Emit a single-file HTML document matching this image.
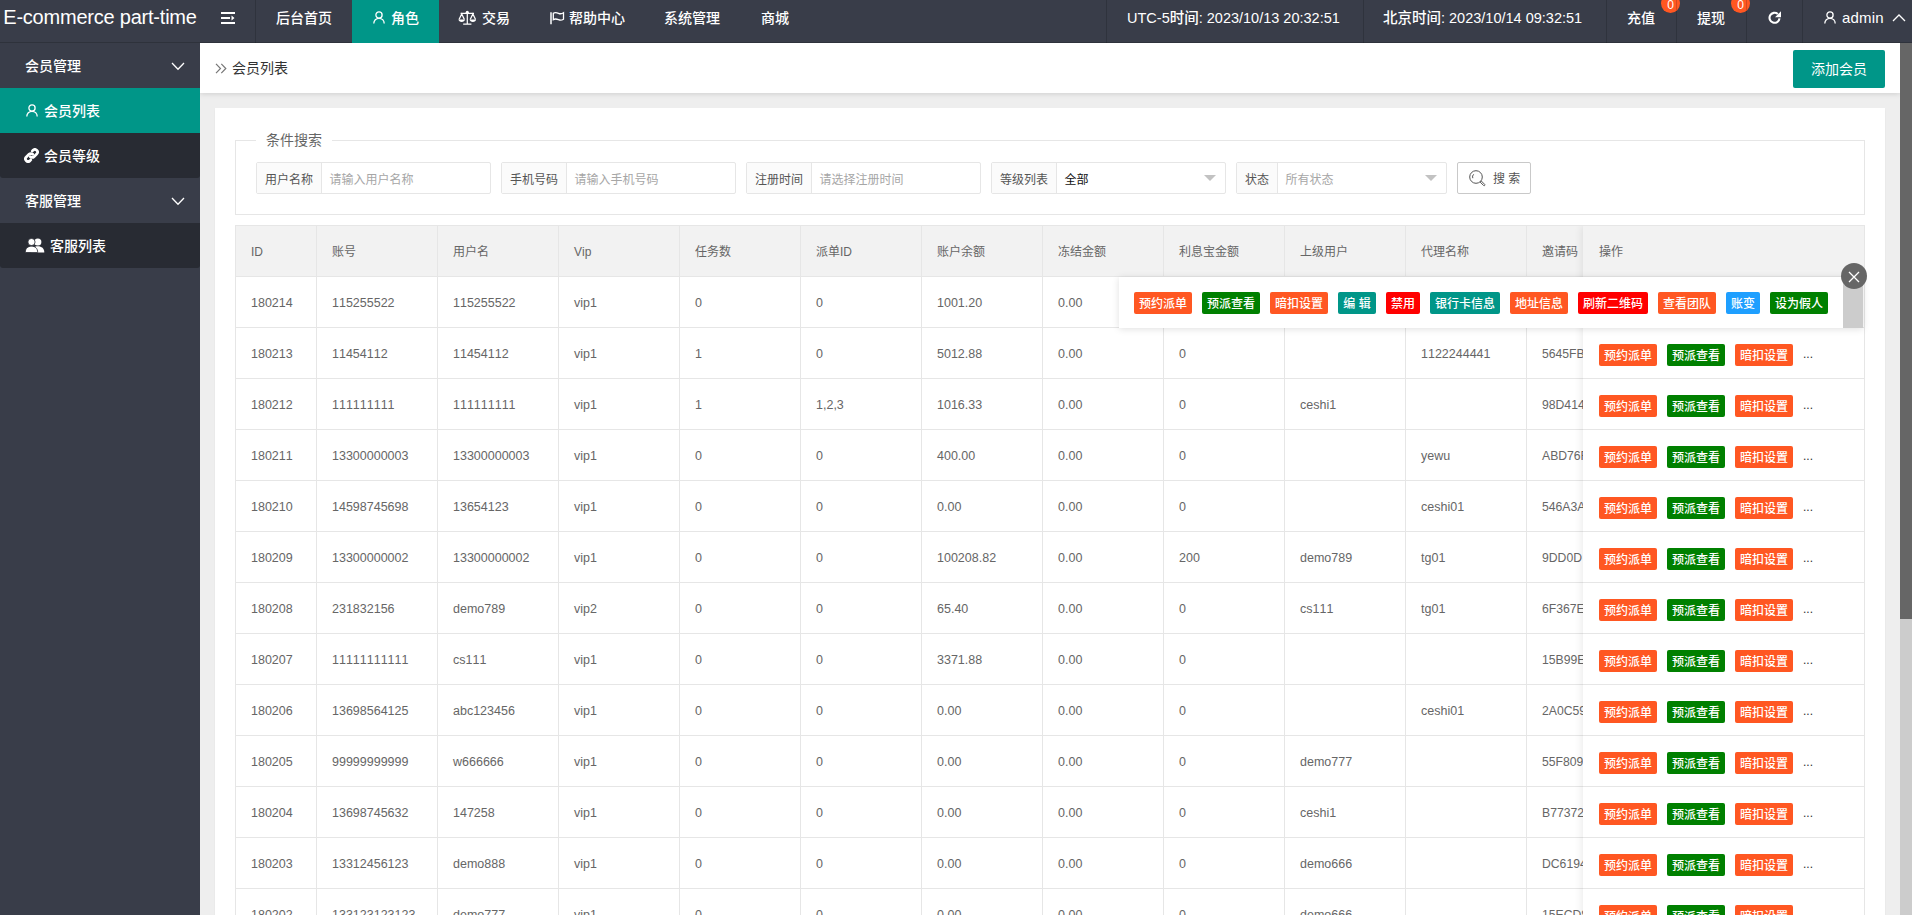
<!DOCTYPE html>
<html lang="zh-CN">
<head>
<meta charset="utf-8">
<title>会员列表</title>
<style>
*{box-sizing:border-box;margin:0;padding:0}
html,body{width:1912px;height:915px;overflow:hidden}
body{font-family:"Liberation Sans","Noto Sans CJK SC",sans-serif;font-size:14px;color:#333;background:#eee;position:relative;line-height:1}
a{text-decoration:none;color:inherit}
svg{display:block}
/* ---------- header ---------- */
.hd{position:absolute;left:0;top:0;width:1912px;height:43px;background:#393D49;color:#fff;z-index:20;overflow:hidden;box-shadow:inset 0 -1px 0 rgba(0,0,0,.18)}
.logo{position:absolute;left:0;top:0;width:200px;height:43px;line-height:35px;text-align:center;font-size:20px;white-space:nowrap;letter-spacing:-.22px}
.nv{position:absolute;top:0;height:43px;line-height:36px;font-size:14px;white-space:nowrap;color:#fff}
.nv.sep{border-left:1px solid rgba(0,0,0,.16)}
.nv.act{background:#009688}
.nv svg{position:absolute}
.nv .t{position:absolute;top:0;font-weight:500}
.tm{font-size:14.5px}
.badge{position:absolute;top:-6px;width:19px;height:19px;border-radius:50%;background:#FF5722;color:#fff;font-size:12px;line-height:22px;text-align:center}
/* ---------- side ---------- */
.sd{position:absolute;left:0;top:43px;width:200px;height:872px;background:#393D49;color:#fff;z-index:10}
.si{position:absolute;left:0;width:200px;height:45px;line-height:45px;font-size:14px;white-space:nowrap}
.si.ch{background:#282B33}
.si.on{background:#009688}
.si.last{border-radius:0 0 3px 3px}
.si .t{position:absolute;top:1px;font-weight:500}
.si svg{position:absolute}
/* ---------- body ---------- */
.bd{position:absolute;left:200px;top:43px;width:1700px;height:872px;background:#eee;overflow:hidden}
.sb{position:absolute;left:1900px;top:43px;width:12px;height:872px;background:#ccc;z-index:5}
.sb i{position:absolute;left:0;top:0;width:12px;height:576px;background:#666}
.ch1{position:absolute;left:0;top:0;width:1700px;height:50px;background:#fff;box-shadow:0 1px 5px rgba(0,0,0,.13)}
.ch1 .bc{position:absolute;left:32px;top:0;line-height:50px;font-size:14px;color:#333}
.addbtn{position:absolute;left:1593px;top:7px;width:92px;height:38px;line-height:38px;background:#009688;color:#fff;font-size:14px;text-align:center;border-radius:2px}
.card{position:absolute;left:15px;top:65px;width:1670px;height:900px;background:#fff;box-shadow:0 1px 2px rgba(0,0,0,.05)}
.fs{position:absolute;left:20px;top:32px;width:1630px;height:75px;border:1px solid #e6e6e6}
.lg{position:absolute;left:20px;top:-11px;height:20px;line-height:20px;padding:0 10px;background:#fff;font-size:14px;color:#666}
.fg{position:absolute;top:21px;height:32px;border:1px solid #e6e6e6;border-radius:2px;background:#fff;font-size:12px}
.fg .lb{position:absolute;left:0;top:0;height:30px;line-height:30px;padding-top:2px;background:#FBFBFB;border-right:1px solid #e6e6e6;color:#555;text-align:center}
.fg .ip{position:absolute;top:0;height:30px;line-height:30px;padding-top:2px;color:#a6a6a6;padding-left:7.500px}
.fg .ip.v{color:#111}
.fg .ar{position:absolute;right:9px;top:12px;width:0;height:0;border:6px solid transparent;border-top-color:#c2c2c2;border-bottom-width:0}
.sbtn{position:absolute;left:1221px;top:21px;width:74px;height:32px;border:1px solid #c9c9c9;border-radius:2px;background:#fff;color:#555;font-size:12px;line-height:30px}
.sbtn svg{position:absolute;left:11px;top:7px}
.sbtn span{position:absolute;left:35px;top:1px}
/* ---------- table ---------- */
.tb{position:absolute;left:20px;top:117px;width:1630px;height:800px;border:1px solid #e6e6e6;border-bottom:0;overflow:hidden;background:#fff}
table{font-kerning:none;border-collapse:separate;border-spacing:0;table-layout:fixed;width:1348px}
th,td{height:51px;border-right:1px solid #e6e6e6;border-bottom:1px solid #e6e6e6;font-size:12.5px;color:#666;font-weight:400;text-align:left;padding:0;overflow:hidden;white-space:nowrap}
th{background:#f2f2f2;font-size:12px}
td:last-child{font-size:12.200px}
.c{position:relative;top:1px;padding:0 15px;height:28px;line-height:28px;overflow:hidden;white-space:nowrap}
.fx{position:absolute;left:1347px;top:0;width:281px;height:800px;background:#fff;box-shadow:-1px 0 8px rgba(0,0,0,.09)}
.fh{height:51px;background:#f2f2f2;border-bottom:1px solid #e6e6e6;line-height:52px;padding-left:16px;font-size:12px;color:#666}
.fr{position:relative;height:51px;border-bottom:1px solid #e6e6e6}
.b{position:absolute;top:16px;height:22px;line-height:24px;overflow:hidden;font-size:12px;color:#fff;border-radius:2px;text-align:center;white-space:nowrap;font-weight:500}
.b.o{background:#FF5722}.b.g{background:#008000}.b.t{background:#009688}.b.r{background:#FF0000}.b.bl{background:#1E9FFF}
.fr .b{width:58px}
.fr .b:nth-child(1){left:16px}.fr .b:nth-child(2){left:84px}.fr .b:nth-child(3){left:152px}
.more{position:absolute;left:220px;top:15px;font-size:12px;line-height:22px;color:#333}
.tips{position:absolute;left:904px;top:169px;width:744px;height:51px;background:#fff;box-shadow:0 1px 7px rgba(0,0,0,.13);z-index:8}
.tips .b{top:15px}
.tips .scr{position:absolute;right:0;top:0;width:20px;height:51px;background:#ccc}
.tipc{position:absolute;left:1626px;top:155px;width:26px;height:26px;border-radius:50%;background:#666;z-index:9}
</style>
</head>
<body>
<!-- header -->
<div class="hd">
  <div class="logo">E-commerce part-time</div>
  <div class="nv" style="left:200px;width:55px">
    <svg style="left:21px;top:12px" width="14" height="12" viewBox="0 0 14 12"><path d="M0 0h14v2H0zM0 5h9v2H0zM0 10h14v2H0zM10.5 3.6l3 2.4-3 2.4z" fill="#fff"/></svg>
  </div>
  <div class="nv sep" style="left:255px;width:97px"><span class="t" style="left:20px">后台首页</span></div>
  <div class="nv act" style="left:352px;width:87px">
    <svg style="left:21px;top:11px" width="12" height="13" viewBox="0 0 12 13"><circle cx="6" cy="4" r="3.1" fill="none" stroke="#fff" stroke-width="1.3"/><path d="M.8 12.6c0-3.2 2.2-5.3 5.2-5.3s5.2 2.100 5.200 5.300" fill="none" stroke="#fff" stroke-width="1.300"/></svg>
    <span class="t" style="left:39px">角色</span>
  </div>
  <div class="nv" style="left:439px;width:90px">
    <svg style="left:19px;top:10px" width="18.600" height="15.500" viewBox="0 0 18 15"><g fill="none" stroke="#fff" stroke-width="1.2"><path d="M9 1.500v11.500M5 13.600h8M2.500 3.300h13"/><path d="M1 9.200l2.600-5.400 2.600 5.400M11.800 9.200l2.600-5.400 2.600 5.400"/></g><path d="M.5 9.200h6.200c0 1.500-1.400 2.300-3.100 2.300S.5 10.700.5 9.200zM11.300 9.200h6.200c0 1.500-1.400 2.300-3.100 2.300s-3.100-.8-3.100-2.300z" fill="#fff"/><circle cx="9" cy="2.200" r="1.500" fill="#fff"/></svg>
    <span class="t" style="left:43px">交易</span>
  </div>
  <div class="nv" style="left:529px;width:115px">
    <svg style="left:21px;top:11px" width="15" height="14" viewBox="0 0 15 14"><path d="M1 1.200v12" stroke="#fff" stroke-width="1.500" fill="none"/><path d="M3.300 2.200c2-1.200 3.600-.6 5.200.1s3 .8 5-.5v6.400c-2 1.300-3.400 1.200-5 .5s-3.200-1.300-5.200-.1z" fill="none" stroke="#fff" stroke-width="1.300"/></svg>
    <span class="t" style="left:40px">帮助中心</span>
  </div>
  <div class="nv" style="left:644px;width:97px"><span class="t" style="left:20px">系统管理</span></div>
  <div class="nv" style="left:741px;width:68px"><span class="t" style="left:20px">商城</span></div>

  <div class="nv sep tm" style="left:1106px;width:257px"><span class="t" style="left:20px">UTC-5时间: 2023/10/13 20:32:51</span></div>
  <div class="nv sep tm" style="left:1363px;width:243px"><span class="t" style="left:19px">北京时间: 2023/10/14 09:32:51</span></div>
  <div class="nv sep" style="left:1606px;width:70px"><span class="t" style="left:20px">充值</span><span class="badge" style="left:54px">0</span></div>
  <div class="nv sep" style="left:1676px;width:70px"><span class="t" style="left:20px">提现</span><span class="badge" style="left:54px">0</span></div>
  <div class="nv sep" style="left:1746px;width:56px">
    <svg style="left:21px;top:11px" width="14" height="14" viewBox="0 0 14 14"><path d="M11.500 7.400a5 5 0 1 1-1.700-4.400" fill="none" stroke="#fff" stroke-width="2.100"/><path d="M13 .2v6H7z" fill="#fff"/></svg>
  </div>
  <div class="nv sep" style="left:1802px;width:110px">
    <svg style="left:21px;top:11px" width="12" height="13" viewBox="0 0 12 13"><circle cx="6" cy="4" r="3.1" fill="none" stroke="#fff" stroke-width="1.300"/><path d="M.8 12.600c0-3.200 2.200-5.300 5.200-5.300s5.200 2.100 5.200 5.300" fill="none" stroke="#fff" stroke-width="1.300"/></svg>
    <span class="t" style="left:39px;font-size:15px;letter-spacing:.2px">admin</span>
    <svg style="left:89px;top:14px" width="14" height="8" viewBox="0 0 14 8"><path d="M1 7l6-6 6 6" fill="none" stroke="#fff" stroke-width="1.300"/></svg>
  </div>
</div>

<!-- sidebar -->
<div class="sd">
  <div class="si" style="top:0"><span class="t" style="left:25px">会员管理</span>
    <svg style="left:171px;top:19px" width="14" height="9" viewBox="0 0 14 9"><path d="M1 1l6 6.300 6-6.300" fill="none" stroke="#fff" stroke-width="1.300"/></svg></div>
  <div class="si ch on" style="top:45px">
    <svg style="left:26px;top:16px" width="12" height="13" viewBox="0 0 12 13"><circle cx="6" cy="4" r="3.100" fill="none" stroke="#fff" stroke-width="1.300"/><path d="M.8 12.600c0-3.200 2.200-5.300 5.200-5.300s5.200 2.100 5.200 5.300" fill="none" stroke="#fff" stroke-width="1.300"/></svg>
    <span class="t" style="left:44px">会员列表</span></div>
  <div class="si ch last" style="top:90px">
    <svg style="left:24px;top:15px" width="15" height="15" viewBox="0 0 15 15"><g fill="none" stroke="#fff" stroke-width="2.700" stroke-linecap="round"><path d="M6.300 8.700a2.600 2.600 0 0 0 3.700 0l2.700-2.700a2.600 2.600 0 0 0-3.700-3.700l-.8.800"/><path d="M8.700 6.300a2.600 2.600 0 0 0-3.700 0l-2.700 2.700a2.600 2.600 0 0 0 3.700 3.700l.8-.8"/></g></svg>
    <span class="t" style="left:44px">会员等级</span></div>
  <div class="si" style="top:135px"><span class="t" style="left:25px">客服管理</span>
    <svg style="left:171px;top:19px" width="14" height="9" viewBox="0 0 14 9"><path d="M1 1l6 6.300 6-6.300" fill="none" stroke="#fff" stroke-width="1.300"/></svg></div>
  <div class="si ch last" style="top:180px">
    <svg style="left:25px;top:15px" width="20" height="15" viewBox="0 0 20 15"><g fill="#fff"><circle cx="12.800" cy="4" r="3.600"/><path d="M6.300 14.500c0-4.200 2.600-6.300 6.500-6.300s6.500 2.100 6.500 6.300z"/><circle cx="6.500" cy="4" r="3.600" stroke="#282B33" stroke-width=".8"/><path d="M.3 14.500c0-4.200 2.500-6.300 6.200-6.300s6.200 2.100 6.200 6.300z" stroke="#282B33" stroke-width=".8"/></g></svg>
    <span class="t" style="left:50px">客服列表</span></div>
</div>

<!-- scrollbar -->
<div class="sb"><i></i></div>

<!-- body -->
<div class="bd">
  <div class="ch1">
    <svg style="position:absolute;left:15px;top:20px" width="12" height="11" viewBox="0 0 12 11"><path d="M1 .8l4.500 4.700L1 10.200M6.300 .8l4.500 4.700-4.500 4.700" fill="none" stroke="#777" stroke-width="1.200"/></svg>
    <span class="bc">会员列表</span>
    <a class="addbtn">添加会员</a>
  </div>
  <div class="card">
    <div class="fs">
      <span class="lg">条件搜索</span>
      <div class="fg" style="left:20px;width:235px"><span class="lb" style="width:65px">用户名称</span><span class="ip" style="left:65px">请输入用户名称</span></div>
      <div class="fg" style="left:265px;width:235px"><span class="lb" style="width:65px">手机号码</span><span class="ip" style="left:65px">请输入手机号码</span></div>
      <div class="fg" style="left:510px;width:235px"><span class="lb" style="width:65px">注册时间</span><span class="ip" style="left:65px">请选择注册时间</span></div>
      <div class="fg" style="left:755px;width:235px"><span class="lb" style="width:65px">等级列表</span><span class="ip v" style="left:65px">全部</span><i class="ar"></i></div>
      <div class="fg" style="left:1000px;width:211px"><span class="lb" style="width:41px">状态</span><span class="ip" style="left:41px">所有状态</span><i class="ar"></i></div>
      <a class="sbtn"><svg width="17" height="17" viewBox="0 0 17 17"><circle cx="7" cy="7" r="6.300" fill="none" stroke="#555" stroke-width="1"/><path d="M3.800 8.200a3.400 3.400 0 0 1 .9-3.900" fill="none" stroke="#555" stroke-width="1"/><path d="M11.200 12.100l1.100-1.100 3.500 3.500a.8.800 0 0 1-1.100 1.100z" fill="none" stroke="#555" stroke-width="1"/></svg><span>搜 索</span></a>
    </div>
    <div class="tb">
      <table>
        <colgroup><col style="width:81px"><col style="width:121px"><col style="width:121px"><col style="width:121px"><col style="width:121px"><col style="width:121px"><col style="width:121px"><col style="width:121px"><col style="width:121px"><col style="width:121px"><col style="width:121px"><col style="width:178px"></colgroup>
        <thead><tr><th><div class="c">ID</div></th><th><div class="c">账号</div></th><th><div class="c">用户名</div></th><th><div class="c">Vip</div></th><th><div class="c">任务数</div></th><th><div class="c">派单ID</div></th><th><div class="c">账户余额</div></th><th><div class="c">冻结金额</div></th><th><div class="c">利息宝金额</div></th><th><div class="c">上级用户</div></th><th><div class="c">代理名称</div></th><th><div class="c">邀请码</div></th></tr></thead>
        <tbody>
<tr><td><div class="c">180214</div></td><td><div class="c">115255522</div></td><td><div class="c">115255522</div></td><td><div class="c">vip1</div></td><td><div class="c">0</div></td><td><div class="c">0</div></td><td><div class="c">1001.20</div></td><td><div class="c">0.00</div></td><td><div class="c">0</div></td><td><div class="c"></div></td><td><div class="c"></div></td><td><div class="c">7C1D2E</div></td></tr>
<tr><td><div class="c">180213</div></td><td><div class="c">11454112</div></td><td><div class="c">11454112</div></td><td><div class="c">vip1</div></td><td><div class="c">1</div></td><td><div class="c">0</div></td><td><div class="c">5012.88</div></td><td><div class="c">0.00</div></td><td><div class="c">0</div></td><td><div class="c"></div></td><td><div class="c">1122244441</div></td><td><div class="c">5645FB</div></td></tr>
<tr><td><div class="c">180212</div></td><td><div class="c">111111111</div></td><td><div class="c">111111111</div></td><td><div class="c">vip1</div></td><td><div class="c">1</div></td><td><div class="c">1,2,3</div></td><td><div class="c">1016.33</div></td><td><div class="c">0.00</div></td><td><div class="c">0</div></td><td><div class="c">ceshi1</div></td><td><div class="c"></div></td><td><div class="c">98D414</div></td></tr>
<tr><td><div class="c">180211</div></td><td><div class="c">13300000003</div></td><td><div class="c">13300000003</div></td><td><div class="c">vip1</div></td><td><div class="c">0</div></td><td><div class="c">0</div></td><td><div class="c">400.00</div></td><td><div class="c">0.00</div></td><td><div class="c">0</div></td><td><div class="c"></div></td><td><div class="c">yewu</div></td><td><div class="c">ABD76F</div></td></tr>
<tr><td><div class="c">180210</div></td><td><div class="c">14598745698</div></td><td><div class="c">13654123</div></td><td><div class="c">vip1</div></td><td><div class="c">0</div></td><td><div class="c">0</div></td><td><div class="c">0.00</div></td><td><div class="c">0.00</div></td><td><div class="c">0</div></td><td><div class="c"></div></td><td><div class="c">ceshi01</div></td><td><div class="c">546A3A</div></td></tr>
<tr><td><div class="c">180209</div></td><td><div class="c">13300000002</div></td><td><div class="c">13300000002</div></td><td><div class="c">vip1</div></td><td><div class="c">0</div></td><td><div class="c">0</div></td><td><div class="c">100208.82</div></td><td><div class="c">0.00</div></td><td><div class="c">200</div></td><td><div class="c">demo789</div></td><td><div class="c">tg01</div></td><td><div class="c">9DD0D</div></td></tr>
<tr><td><div class="c">180208</div></td><td><div class="c">231832156</div></td><td><div class="c">demo789</div></td><td><div class="c">vip2</div></td><td><div class="c">0</div></td><td><div class="c">0</div></td><td><div class="c">65.40</div></td><td><div class="c">0.00</div></td><td><div class="c">0</div></td><td><div class="c">cs111</div></td><td><div class="c">tg01</div></td><td><div class="c">6F367E</div></td></tr>
<tr><td><div class="c">180207</div></td><td><div class="c">11111111111</div></td><td><div class="c">cs111</div></td><td><div class="c">vip1</div></td><td><div class="c">0</div></td><td><div class="c">0</div></td><td><div class="c">3371.88</div></td><td><div class="c">0.00</div></td><td><div class="c">0</div></td><td><div class="c"></div></td><td><div class="c"></div></td><td><div class="c">15B99E</div></td></tr>
<tr><td><div class="c">180206</div></td><td><div class="c">13698564125</div></td><td><div class="c">abc123456</div></td><td><div class="c">vip1</div></td><td><div class="c">0</div></td><td><div class="c">0</div></td><td><div class="c">0.00</div></td><td><div class="c">0.00</div></td><td><div class="c">0</div></td><td><div class="c"></div></td><td><div class="c">ceshi01</div></td><td><div class="c">2A0C59</div></td></tr>
<tr><td><div class="c">180205</div></td><td><div class="c">99999999999</div></td><td><div class="c">w666666</div></td><td><div class="c">vip1</div></td><td><div class="c">0</div></td><td><div class="c">0</div></td><td><div class="c">0.00</div></td><td><div class="c">0.00</div></td><td><div class="c">0</div></td><td><div class="c">demo777</div></td><td><div class="c"></div></td><td><div class="c">55F809</div></td></tr>
<tr><td><div class="c">180204</div></td><td><div class="c">13698745632</div></td><td><div class="c">147258</div></td><td><div class="c">vip1</div></td><td><div class="c">0</div></td><td><div class="c">0</div></td><td><div class="c">0.00</div></td><td><div class="c">0.00</div></td><td><div class="c">0</div></td><td><div class="c">ceshi1</div></td><td><div class="c"></div></td><td><div class="c">B77372</div></td></tr>
<tr><td><div class="c">180203</div></td><td><div class="c">13312456123</div></td><td><div class="c">demo888</div></td><td><div class="c">vip1</div></td><td><div class="c">0</div></td><td><div class="c">0</div></td><td><div class="c">0.00</div></td><td><div class="c">0.00</div></td><td><div class="c">0</div></td><td><div class="c">demo666</div></td><td><div class="c"></div></td><td><div class="c">DC6194</div></td></tr>
<tr><td><div class="c">180202</div></td><td><div class="c">133123123123</div></td><td><div class="c">demo777</div></td><td><div class="c">vip1</div></td><td><div class="c">0</div></td><td><div class="c">0</div></td><td><div class="c">0.00</div></td><td><div class="c">0.00</div></td><td><div class="c">0</div></td><td><div class="c">demo666</div></td><td><div class="c"></div></td><td><div class="c">15ECD8</div></td></tr>
        </tbody>
      </table>
      <div class="fx">
        <div class="fh">操作</div>
<div class="fr"><a class="b o">预约派单</a><a class="b g">预派查看</a><a class="b o">暗扣设置</a><span class="more">...</span></div>
<div class="fr"><a class="b o">预约派单</a><a class="b g">预派查看</a><a class="b o">暗扣设置</a><span class="more">...</span></div>
<div class="fr"><a class="b o">预约派单</a><a class="b g">预派查看</a><a class="b o">暗扣设置</a><span class="more">...</span></div>
<div class="fr"><a class="b o">预约派单</a><a class="b g">预派查看</a><a class="b o">暗扣设置</a><span class="more">...</span></div>
<div class="fr"><a class="b o">预约派单</a><a class="b g">预派查看</a><a class="b o">暗扣设置</a><span class="more">...</span></div>
<div class="fr"><a class="b o">预约派单</a><a class="b g">预派查看</a><a class="b o">暗扣设置</a><span class="more">...</span></div>
<div class="fr"><a class="b o">预约派单</a><a class="b g">预派查看</a><a class="b o">暗扣设置</a><span class="more">...</span></div>
<div class="fr"><a class="b o">预约派单</a><a class="b g">预派查看</a><a class="b o">暗扣设置</a><span class="more">...</span></div>
<div class="fr"><a class="b o">预约派单</a><a class="b g">预派查看</a><a class="b o">暗扣设置</a><span class="more">...</span></div>
<div class="fr"><a class="b o">预约派单</a><a class="b g">预派查看</a><a class="b o">暗扣设置</a><span class="more">...</span></div>
<div class="fr"><a class="b o">预约派单</a><a class="b g">预派查看</a><a class="b o">暗扣设置</a><span class="more">...</span></div>
<div class="fr"><a class="b o">预约派单</a><a class="b g">预派查看</a><a class="b o">暗扣设置</a><span class="more">...</span></div>
<div class="fr"><a class="b o">预约派单</a><a class="b g">预派查看</a><a class="b o">暗扣设置</a><span class="more">...</span></div>
      </div>
    </div>
    <div class="tips">
      <a class="b o" style="left:15px;width:58px">预约派单</a>
      <a class="b g" style="left:83px;width:58px">预派查看</a>
      <a class="b o" style="left:151px;width:58px">暗扣设置</a>
      <a class="b t" style="left:219px;width:38px">编 辑</a>
      <a class="b r" style="left:267px;width:34px">禁用</a>
      <a class="b t" style="left:311px;width:70px">银行卡信息</a>
      <a class="b o" style="left:391px;width:58px">地址信息</a>
      <a class="b r" style="left:459px;width:70px">刷新二维码</a>
      <a class="b o" style="left:539px;width:58px">查看团队</a>
      <a class="b bl" style="left:607px;width:34px">账变</a>
      <a class="b g" style="left:651px;width:58px">设为假人</a>
      <div class="scr"></div>
    </div>
    <div class="tipc"><svg style="position:absolute;left:7px;top:8px" width="12" height="12" viewBox="0 0 12 12"><path d="M1 1l10 10M11 1L1 11" stroke="#fff" stroke-width="1.300" fill="none"/></svg></div>
  </div>
</div>
</body>
</html>
